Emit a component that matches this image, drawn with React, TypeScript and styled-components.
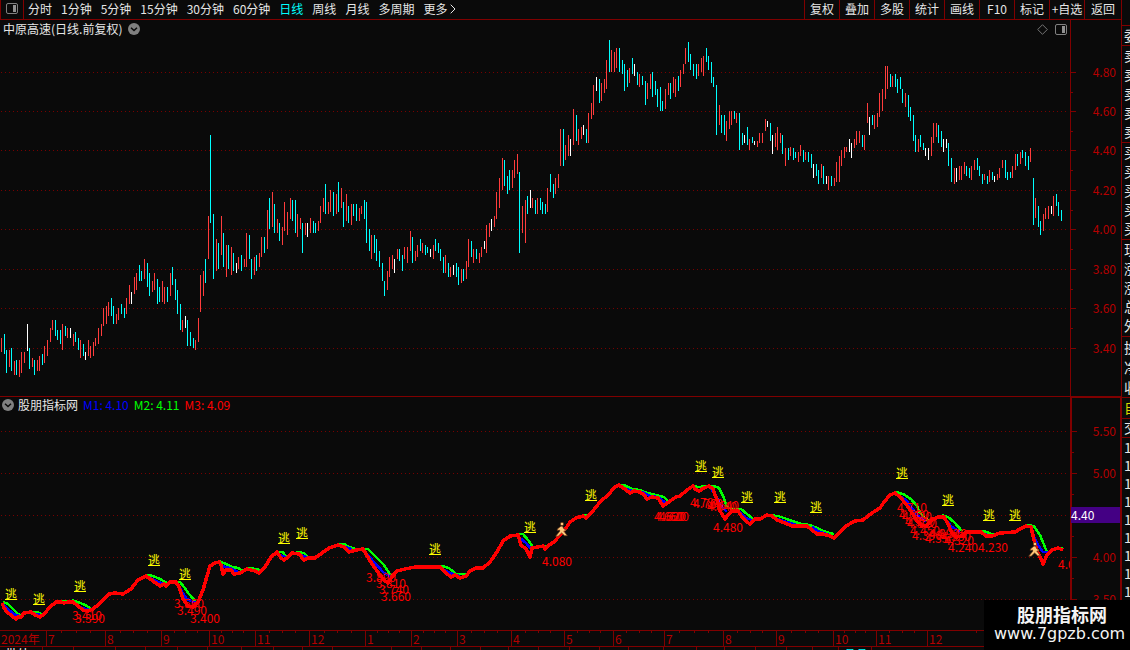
import React from 'react';
import styled, { createGlobalStyle } from 'styled-components';

const GlobalStyle = createGlobalStyle`
  * { box-sizing: border-box; }
  html, body { margin: 0; background: #0a0a0a; }
  body {
    font-family: "Noto Sans CJK SC", "Liberation Sans", sans-serif;
    font-size: 12px;
    line-height: 16px;
    color: #e6e6e6;
  }
  button { font: inherit; color: inherit; background: none; border: 0; padding: 0; cursor: pointer; white-space: nowrap; }
  svg { display: block; }
`;

const RED = '#800000';

/* ---------- chart data ---------- */

/* One session per entry: x, colour (r up, c down, w flat), top-bottom */
const SESSIONS = `
1r338-352 4c334-354 6c350-373 9r350-367 11c348-371 14r361-375 16c360-375 19r360-377 21r352-373 24r352-363
27w324-351 29c348-369 32r358-367 34c360-375 37r360-371 39r356-371 42c354-365 44r346-363 47r340-356 50r328-342
52r320-330 55c320-336 57c330-340 60c330-344 62r324-350 65c326-336 67r328-338 70w328-338 73r334-346 75c332-342
78c338-350 80r340-358 83c344-356 85w352-360 88r340-356 90r346-358 93r342-356 95r338-346 98r328-344 101r324-336
103r308-326 106r306-324 108r302-316 111c298-316 113c306-324 116r314-324 118r308-320 121c304-314 124c308-318
126r298-314 129r285-304 131w292-304 134r277-294 136r273-290 139c265-281 141c271-281 144r259-279 147c263-287
149c273-296 152r281-292 154r273-290 157c279-304 159c287-302 162r281-302 164r287-304 167c287-302 170r273-296
172c267-285 175c279-300 177c290-314 180c304-330 182r320-332 185w316-328 187c320-346 190c332-346 193c338-348
195r340-350 198r318-342 200r275-312 203r271-296 205c259-283 208r216-259 210c135-223 213c214-279 216r239-271
218c243-269 221r216-255 223c233-267 226r245-277 228c245-269 231r247-275 233c253-271 236w263-273 238r257-269
241c255-271 244r259-267 246r233-267 249c235-259 251c259-279 254r257-275 256c255-271 259r253-267 261r237-257
264c237-253 267r210-249 269c198-229 272r192-227 274c204-233 277r219-233 279c223-241 282r227-245 284r202-231
287r212-235 290r198-219 292c200-221 295c200-233 297r214-237 300r218-229 302c223-253 305r223-235 307w223-237
310r218-233 313c221-233 315c223-233 318r221-231 320r206-223 323r198-212 325c184-214 328r202-214 330r190-212
333c192-216 336r194-214 338c182-212 341r188-208 343c202-227 346r194-221 348c206-223 351r204-225 353c204-216
356c204-221 359r208-221 361r206-214 364c200-219 366c202-243 369c229-251 371r235-259 374c235-253 376c239-261
379c251-267 382c263-281 384c281-296 387r271-290 389r257-277 392r255-269 394w259-273 397r249-259 399c249-261
402c255-271 404r247-259 407r247-263 410r231-251 412c237-263 415r251-261 417r245-257 420c239-251 422r243-253
425c245-255 427c247-253 430w249-257 433r245-259 435c239-251 438c243-253 440c249-261 443c257-273 445r255-273
448c263-277 450r267-277 453w265-275 456c263-277 458c267-285 461r269-283 463c269-281 466r261-279 468r239-267
471c241-257 473r249-263 476c249-259 479r253-263 481r247-257 484w241-249 486r225-253 489r223-237 491w219-231
494r216-227 496r192-219 499r178-208 502r158-190 504c160-186 507c176-194 509c170-190 512r170-188 514r160-178
517r154-174 519c172-253 522r206-233 525r200-243 527c196-214 530w190-208 532r198-208 535c200-214 537r198-214
540c198-210 542c202-214 545c204-214 547r188-212 550c174-192 553c184-198 555r178-194 558r174-188 560r129-166
563c129-166 565r145-160 568r135-156 570w139-156 573r109-145 576c115-141 578r129-145 581r127-139 583w125-135
586c129-143 588r113-143 591r103-119 593r85-115 596w77-91 599c79-103 601r83-101 604r79-93 606r60-89 609c40-72
611r50-72 614r52-72 616r48-68 619c48-72 622c60-74 624c64-91 627c70-87 629r68-83 632c58-74 634w64-76 637c72-85
639r74-87 642c76-85 645c81-105 647r83-99 650r74-89 652c72-97 655c81-95 657c89-107 660c87-111 662c101-111
665r89-109 668r83-95 670c83-99 673r77-93 675r79-97 678c76-91 680r70-87 683r64-74 685r48-64 688c42-62 690c54-70
693c64-76 696c64-79 698r64-76 701r58-72 703r56-76 706c48-62 708c56-70 711c62-83 713c77-87 716c85-135
719r105-125 721c115-133 724c115-135 726r121-141 729r111-129 731r111-125 734c111-119 736r113-123 739c113-150
742c133-145 744w135-143 747c127-145 749r139-150 752c137-143 754w141-145 757r141-147 759r133-143 762r133-143
765r119-131 767w121-127 770c123-141 772w135-154 775r133-147 777r127-150 780r133-143 782c135-154 785r148-166
788c148-160 790r147-156 793c148-160 795c152-158 798r152-162 800r145-156 803c150-162 805r152-160 808c152-162
811c154-168 813w164-178 816c164-176 818c170-184 821r164-178 823c166-184 826w176-184 828r176-190 831c176-186
834r178-186 836r162-182 839r156-182 841r150-166 844r147-158 846r147-152 849w139-152 851w143-158 854r139-148
856r131-145 859r131-143 862c135-147 864r135-150 867r103-123 869w117-135 872c115-125 874r115-129 877r113-127
879r93-117 882r89-111 885r66-99 887r66-89 890c74-87 892r76-87 895c74-87 897c79-93 900c77-89 902c89-103
905r93-107 908c95-117 910c107-121 913c115-141 915c135-152 918r139-152 920c135-147 923c143-150 925w148-156
928w148-160 931r137-156 933r123-143 936r123-137 938c125-143 941c131-147 943w139-152 946w139-148 948c143-166
951c158-182 954r168-184 956w168-182 959r166-180 961r166-180 964r162-174 966c166-176 969c168-178 971r166-180
974r160-170 977c158-170 979c166-176 982c174-184 984r174-180 987c176-184 989r170-182 992c172-180 994w176-182
997r174-180 999r168-178 1002r160-168 1005c160-178 1007c172-180 1010c172-178 1012r166-178 1015r154-170
1017c154-166 1020r152-164 1022c150-158 1025c152-166 1028c156-170 1030r148-162 1033c178-225 1035r198-218
1038c206-227 1040c221-235 1043r214-231 1045r208-219 1048r206-219 1051w206-214 1053r196-216 1056c194-206
1058c202-216 1061c210-221`
  .trim()
  .split(/\s+/)
  .map((s) => {
    const m = /^(\d+)([rcw])(\d+)-(\d+)$/.exec(s)!;
    return { x: +m[1], tone: m[2] as 'r' | 'c' | 'w', top: +m[3], bottom: +m[4] };
  });

const TONE = { r: '#ff3c3c', c: '#00ffff', w: '#ffffff' };

const M3 =
  '2,603 4,608 7,612 12,616 16,619 18,617 21,617 24,613 31,612 35,615 40,617 44,614 50,607 56,602 61,602 64,603 68,602 73,602 78,606 83,610 88,611 93,609 99,604 109,594 115,593 123,594 131,589 138,580 146,576 153,581 160,586 164,584 166,586 170,582 176,582 179,587 183,599 188,606 193,607 198,602 203,590 207,576 210,566 215,563 219,562 221,565 223,574 226,570 231,570 234,574 240,573 247,569 255,571 259,573 265,567 271,557 277,552 281,558 284,560 288,557 292,553 299,554 304,560 308,558 315,558 322,553 329,548 338,545 344,547 349,552 356,550 363,549 366,554 372,564 380,575 384,580 388,583 392,577 397,571 405,569 415,567 440,567 446,573 451,577 455,575 460,578 466,576 470,571 476,568 483,568 490,562 497,552 503,541 510,536 518,535 521,545 526,549 530,557 532,548 538,547 543,546 545,549 549,545 554,542 560,535 566,528 570,522 576,518 583,516 586,518 592,512 600,502 608,495 615,487 619,485 626,490 630,493 634,491 640,492 644,495 647,499 652,497 658,498 663,506 670,501 676,497 680,496 687,490 693,486 695,489 699,491 704,488 709,486 713,489 717,500 720,511 725,519 728,515 732,511 738,511 742,517 747,522 750,524 755,519 760,519 767,515 772,516 777,520 785,523 792,526 800,526 807,526 812,530 817,534 823,534 830,536 834,538 838,534 846,526 855,521 863,520 872,513 880,508 884,502 890,495 895,493 900,497 906,504 912,513 917,521 922,526 927,525 932,520 938,517 944,517 948,524 952,533 956,537 962,536 966,532 973,532 981,532 986,536 992,536 1000,533 1015,532 1020,529 1026,526 1031,527 1034,540 1037,551 1041,559 1043,564 1047,555 1052,550 1058,548 1063,550';

const M2 = [
  '3,602 8,604 13,609 18,614 21,616', '32,612 38,612 42,615', '56,601 68,601', '72,600 78,602 85,605 91,609',
  '118,593 124,593', '147,575 153,576 160,579 167,583', '171,582 180,582 184,587 189,594 196,602 200,602',
  '219,561 226,564 232,567 238,568 243,571 250,568 260,570', '277,552 283,552 286,557', '296,552 304,553 308,557',
  '338,544 344,544 349,547 356,549', '361,549 368,549 376,557 384,565 391,576',
  '415,566 442,566 449,568 456,574 466,574', '516,534 523,534 529,541 533,547 546,546', '582,515 587,515',
  '618,485 624,485 632,489 640,490 647,493 656,495 664,497 668,501',
  '692,486 699,487 708,486 714,486 719,488 723,496 727,507 735,510 741,509 747,514 753,519 757,519',
  '767,515 778,516 787,519 795,522 802,524 810,525 817,528 826,532 834,534',
  '896,492 903,494 911,499 917,506 920,513 926,519 930,521', '942,515 948,517 954,522 962,531',
  '978,531 984,531 994,535', '1026,525 1034,526 1040,535 1047,552', '1060,548 1063,548',
];

const M1 = [
  '4,605 9,610 14,614 19,616', '35,614 41,615', '74,603 82,608 90,610', '150,578 158,582 165,584',
  '178,584 182,592 187,599 193,602 198,602', '222,566 230,568 238,572', '280,555 286,557', '300,555 307,557',
  '345,547 352,549', '365,552 374,562 384,573 391,577', '442,569 450,573 460,576', '520,538 526,543 531,549',
  '624,488 632,491 642,492 650,496 658,497 666,503', '711,489 716,496 722,507 727,512', '740,512 746,518 752,520',
  '775,518 787,522 797,525', '812,527 820,532 830,535', '898,495 906,500 912,508 918,516 926,521',
  '945,519 952,527 960,532', '980,533 988,535', '1031,530 1037,543 1043,552 1048,552',
];

/* x, y of the underline */
const EXITS = [
  [6, 599], [34, 604], [75, 591], [149, 565], [180, 579], [279, 543], [297, 538], [430, 554], [525, 532],
  [586, 500], [696, 471], [713, 477], [742, 502], [775, 502], [811, 512], [897, 478], [943, 505], [984, 520],
  [1010, 520],
];

/* x, vertical centre, price */
const STOPS: [number, number, string][] = [
  [73, 616, '3.410'], [76, 619, '3.390'], [175, 604, '3.560'], [178, 611, '3.490'], [191, 619, '3.400'],
  [367, 578, '3.890'], [377, 584, '3.810'], [380, 590, '3.740'], [382, 597, '3.660'], [543, 562, '4.080'],
  [655, 517, '4.660'], [657, 517, '4.620'], [660, 517, '4.600'], [691, 503, '4.780'], [694, 504, '4.760'],
  [708, 507, '4.640'], [710, 506, '4.640'], [714, 528, '4.480'], [898, 508, '4.710'], [900, 515, '4.660'],
  [903, 517, '4.620'], [906, 522, '4.560'], [908, 524, '4.520'], [911, 531, '4.450'], [913, 536, '4.390'],
  [926, 539, '4.350'], [930, 534, '4.390'], [938, 534, '4.340'], [942, 537, '4.330'], [945, 541, '4.320'],
  [949, 548, '4.240'], [979, 548, '4.230'], [1059, 565, '4.050'],
];

const UPPER = { top: 20, height: 376 };
const LOWER = { top: 397, height: 233 };
const LOWER_AXIS = { top: 398, height: 232 };

const PRICE_ROWS: [number, string][] = [
  [72, '4.80'], [111, '4.60'], [150, '4.40'], [190, '4.20'], [229, '4.00'], [269, '3.80'], [308, '3.60'], [348, '3.40'],
];
const LEVEL_ROWS: [number, string][] = [[431, '5.50'], [473, '5.00'], [515, '4.50'], [557, '4.00'], [599, '3.50']];

const MONTHS: [string, number][] = [
  ['7', 59], ['8', 56], ['9', 48], ['10', 46], ['11', 54], ['12', 56], ['1', 46], ['2', 46], ['3', 54], ['4', 53],
  ['5', 49], ['6', 51], ['7', 59], ['8', 53], ['9', 57], ['10', 43], ['11', 51], ['12', 194],
];

const FOOT_TICKS = [42, 73, 115, 145, 177, 207, 241, 273, 302, 332, 391, 421, 450, 480, 508, 538, 569, 599, 628, 663, 696, 724, 755, 786, 812, 838, 871];

/* ---------- layout ---------- */

const Screen = styled.div`
  position: relative;
  display: flex;
  min-height: 100vh;
  overflow: hidden;
  background: #0a0a0a;
`;
const Main = styled.main`
  flex: 1;
  min-width: 0;
  display: flex;
  flex-direction: column;
`;
const Toolbar = styled.header`
  display: flex;
  flex: none;
  height: 20px;
  border-bottom: 1px solid ${RED};
`;
const ToggleButton = styled.button`
  display: flex;
  justify-content: center;
  width: 24px;
  padding-top: 3px;
  border: solid ${RED};
  border-width: 0 1px;
`;
const Periods = styled.nav`
  display: flex;
  gap: 9px;
  height: 18px;
  padding-left: 4px;
`;
const PeriodButton = styled.button<{ $active?: boolean }>`
  display: flex;
  align-items: center;
  gap: 3px;
  line-height: 18px;
  color: ${(p) => (p.$active ? '#00ffff' : '#e6e6e6')};
`;
const Tools = styled.nav`
  display: flex;
  margin-left: auto;
`;
const ToolButton = styled.button`
  width: 35px;
  padding-bottom: 2px;
  line-height: 17px;
  border-left: 1px solid ${RED};
  &:last-child { width: 37px; }
`;
const Panel = styled.section<{ $grow: number; $ruled?: boolean }>`
  display: flex;
  flex: ${(p) => p.$grow} 0 0;
  border-top: ${(p) => (p.$ruled ? `1px solid ${RED}` : '0')};
`;
const Plot = styled.div`
  position: relative;
  flex: 1;
  min-width: 0;
  overflow: hidden;
`;
const Drawing = styled.svg`
  position: absolute;
  inset: 0;
  width: 100%;
  height: 100%;
`;
const Caption = styled.div<{ $indicator?: boolean }>`
  position: relative;
  display: flex;
  align-items: center;
  gap: ${(p) => (p.$indicator ? '4px' : '6px')};
  height: ${(p) => (p.$indicator ? '16px' : '18px')};
  padding: 0 3px 0 ${(p) => (p.$indicator ? '2px' : '3px')};
`;
const PanelTitle = styled.h2`
  margin: 0;
  font-size: 12px;
  font-weight: 400;
`;
const Reading = styled.span<{ $color: string }>`
  margin-left: 1px;
  color: ${(p) => p.$color};
`;
const CaptionTools = styled.div`
  display: flex;
  gap: 7px;
  margin-left: auto;
`;
const Axis = styled.aside<{ $heavy?: boolean }>`
  position: relative;
  flex: none;
  width: 51px;
  border-left: ${(p) => (p.$heavy ? '2px' : '1px')} solid ${RED};
  border-right: ${(p) => (p.$heavy ? '1px' : '0')} solid ${RED};
  border-top: ${(p) => (p.$heavy ? '1px' : '0')} solid ${RED};
`;
const AxisLabel = styled.span<{ $inset: number }>`
  position: absolute;
  right: ${(p) => p.$inset}px;
  margin-top: -8px;
  color: #b40000;
`;
const Tick = styled.i<{ $major?: boolean }>`
  position: absolute;
  left: 0;
  width: ${(p) => (p.$major ? '5px' : '2px')};
  height: 1px;
  background: ${RED};
`;
const LastPrice = styled.span`
  position: absolute;
  left: -1px;
  right: 0;
  height: 16px;
  margin-top: -8px;
  background: #440084;
  color: #ffffff;
`;
const ExitMark = styled.span`
  position: absolute;
  height: 12px;
  margin: -11px 0 0 -1px;
  line-height: 11px;
  border-bottom: 1px solid #ffff00;
  color: #ffff00;
`;
const StopPrice = styled.span`
  position: absolute;
  margin: -9px 0 0 -1px;
  color: #ff0000;
  white-space: nowrap;
`;
const Runner = styled.svg`
  position: absolute;
  margin: -8px 0 0 -6px;
`;
const TimeAxis = styled.div`
  display: grid;
  grid-template-columns: minmax(0, 46fr) ${MONTHS.map(([, span]) => `minmax(0, ${span}fr)`).join(' ')};
  flex: none;
  height: 16px;
  border-top: 1px solid ${RED};
  color: #b40000;
  line-height: 15px;
`;
const Month = styled.span<{ $first?: boolean }>`
  padding-left: 1px;
  white-space: nowrap;
  border-left: ${(p) => (p.$first ? '0' : '1px')} solid ${RED};
  background: ${(p) =>
    p.$first
      ? 'none'
      : `linear-gradient(${RED}, ${RED}) 25% 0 / 1px 2px no-repeat,
         linear-gradient(${RED}, ${RED}) 50% 0 / 1px 2px no-repeat,
         linear-gradient(${RED}, ${RED}) 75% 0 / 1px 2px no-repeat`};
`;
const Foot = styled.footer`
  position: relative;
  flex: none;
  height: 4px;
  overflow: hidden;
  border-top: 1px solid ${RED};
`;
const FootText = styled.span<{ $accent?: boolean }>`
  position: absolute;
  top: 0;
  line-height: 14px;
  color: ${(p) => (p.$accent ? '#00ffff' : '#ffffff')};
`;
const FootTick = styled.i`
  position: absolute;
  top: 0;
  width: 1px;
  height: 4px;
  background: ${RED};
`;
const Quotes = styled.aside`
  flex: none;
  width: 9px;
  padding-top: 25px;
  overflow: hidden;
  border-left: 1px solid ${RED};
  font-size: 14px;
`;
const QuoteGroup = styled.div<{ $row: number; $accent?: boolean; $end?: number }>`
  width: 40px;
  padding: 0 0 ${(p) => p.$end ?? 1}px 2px;
  border-top: 1px solid ${RED};
  line-height: ${(p) => p.$row}px;
  color: ${(p) => (p.$accent ? '#d8d800' : '#e6e6e6')};
`;
const QuoteRow = styled.div`
  white-space: nowrap;
`;
const Watermark = styled.div`
  position: absolute;
  right: 0;
  bottom: 0;
  width: 146px;
  height: 50px;
  padding: 4px 0 0 10px;
  background: #000000;
  color: #f4f4f4;
  text-align: center;
`;
const SiteName = styled.div`
  font-size: 18px;
  font-weight: 700;
  line-height: 21px;
`;
const SiteLink = styled.a`
  display: block;
  padding-right: 8px;
  font-family: "DejaVu Sans", sans-serif;
  font-size: 16px;
  line-height: 18px;
  color: inherit;
  text-decoration: none;
`;

/* ---------- small drawings ---------- */

const PanelIcon = () => (
  <svg width="12" height="11" viewBox="0 0 12 11" aria-hidden="true">
    <rect x="0.5" y="0.5" width="11" height="10" rx="1.5" fill="none" stroke="#808080" />
    <rect x="7" y="2" width="3" height="7" fill="#909090" />
  </svg>
);
const Chevron = () => (
  <svg width="12" height="12" viewBox="0 0 12 12" aria-hidden="true">
    <circle cx="6" cy="6" r="6" fill="#808080" />
    <path d="M3 4.8 6 7.5 9 4.8" fill="none" stroke="#0a0a0a" strokeWidth="1.5" />
  </svg>
);
const Diamond = () => (
  <svg width="11" height="11" viewBox="0 0 11 11" aria-hidden="true">
    <path d="M5.5 .7 10.3 5.5 5.5 10.3 .7 5.5Z" fill="none" stroke="#808080" strokeWidth=".9" />
  </svg>
);

const pctX = (x: number) => `${(x / 1070) * 100}%`;
const pctY = (y: number, p: { top: number; height: number }) => `${((y - p.top) / p.height) * 100}%`;

const Grid = ({ rows }: { rows: [number, string][] }) => (
  <g stroke="#780000" strokeDasharray="1 3" shapeRendering="crispEdges">
    {rows.map(([y]) => (
      <line key={y} x1="1" x2="1066" y1={y + 0.5} y2={y + 0.5} />
    ))}
  </g>
);

const Scale = ({ rows, minor, area, inset }: { rows: [number, string][]; minor: number[]; area: typeof UPPER; inset: number }) => (
  <>
    {rows.map(([y, text]) => (
      <React.Fragment key={y}>
        <Tick $major style={{ top: pctY(y, area) }} />
        {text !== '4.50' && <AxisLabel $inset={inset} style={{ top: pctY(y, area) }}>{text}</AxisLabel>}
      </React.Fragment>
    ))}
    {minor.map((y) => (
      <Tick key={y} style={{ top: pctY(y, area) }} />
    ))}
  </>
);

const PERIODS = ['分时', '1分钟', '5分钟', '15分钟', '30分钟', '60分钟', '日线', '周线', '月线', '多周期'];
const TOOLS = ['复权', '叠加', '多股', '统计', '画线', 'F10', '标记', '+自选', '返回'];

export default function App() {
  return (
    <>
      <GlobalStyle />
      <Screen>
        <Main>
          <Toolbar>
            <ToggleButton aria-label="侧栏"><PanelIcon /></ToggleButton>
            <Periods aria-label="周期">
              {PERIODS.map((p) => (
                <PeriodButton key={p} $active={p === '日线'}>{p}</PeriodButton>
              ))}
              <PeriodButton>
                更多
                <svg width="6" height="10" viewBox="0 0 6 10" aria-hidden="true">
                  <path d="M.7 .7 5 5 .7 9.3" fill="none" stroke="#e6e6e6" />
                </svg>
              </PeriodButton>
            </Periods>
            <Tools aria-label="工具">
              {TOOLS.map((t) => <ToolButton key={t}>{t}</ToolButton>)}
            </Tools>
          </Toolbar>

          <Panel $grow={376}>
            <Plot>
              <Drawing viewBox="0 20 1070 376" preserveAspectRatio="none">
                <Grid rows={PRICE_ROWS} />
                <g shapeRendering="crispEdges">
                  {SESSIONS.map((s) => (
                    <rect key={s.x} x={s.x} y={s.top} width="1" height={s.bottom - s.top} fill={TONE[s.tone]} />
                  ))}
                </g>
              </Drawing>
              <Caption>
                <PanelTitle>中原高速(日线.前复权)</PanelTitle>
                <button aria-label="展开"><Chevron /></button>
                <CaptionTools>
                  <button aria-label="标注"><Diamond /></button>
                  <button aria-label="分栏"><PanelIcon /></button>
                </CaptionTools>
              </Caption>
            </Plot>
            <Axis>
              <Scale rows={PRICE_ROWS} minor={[92, 131, 170, 210, 249, 289, 328]} area={UPPER} inset={5} />
            </Axis>
          </Panel>

          <Panel $grow={233} $ruled>
            <Plot>
              <Drawing viewBox="0 397 1070 233" preserveAspectRatio="none">
                <Grid rows={LEVEL_ROWS} />
                <g fill="none" shapeRendering="crispEdges">
                  {M2.map((p) => <polyline key={p} points={p} stroke="#00ff00" strokeWidth="2.5" />)}
                  {M1.map((p) => <polyline key={p} points={p} stroke="#0000ff" strokeWidth="2.5" />)}
                  <polyline points={M3} stroke="#ff0000" strokeWidth="3.5" strokeLinejoin="round" />
                </g>
              </Drawing>
              {EXITS.map(([x, y]) => (
                <ExitMark key={x} style={{ left: pctX(x), top: pctY(y, LOWER) }}>逃</ExitMark>
              ))}
              {STOPS.map(([x, y, text]) => (
                <StopPrice key={`${x}-${y}`} style={{ left: pctX(x), top: pctY(y, LOWER) }}>{text}</StopPrice>
              ))}
              {[[561, 530], [1034, 550]].map(([x, y]) => (
                <Runner key={x} width="13" height="15" viewBox="0 0 13 15" aria-hidden="true" style={{ left: pctX(x), top: pctY(y, LOWER) }}>
                  <g fill="#ffc878" stroke="#5a2810" strokeWidth=".7">
                    <circle cx="7" cy="2" r="1.7" />
                    <path d="M7.4 4 9 7 11.2 7.6 10.6 9 8.8 9 12.4 13.8 9.6 13.8 6.6 11 3.2 14.2 .6 14.2 4.6 9.4 4.6 8 2.2 8.6 2.4 7 5.8 4.2Z" />
                  </g>
                </Runner>
              ))}
              <Caption $indicator>
                <button aria-label="指标菜单"><Chevron /></button>
                <PanelTitle>股朋指标网</PanelTitle>
                <Reading $color="#0000ff">M1: 4.10</Reading>
                <Reading $color="#00ff00">M2: 4.11</Reading>
                <Reading $color="#ff0000">M3: 4.09</Reading>
              </Caption>
            </Plot>
            <Axis $heavy>
              <Scale rows={LEVEL_ROWS} minor={[452, 494, 536, 578]} area={LOWER_AXIS} inset={4} />
              <LastPrice style={{ top: pctY(515, LOWER_AXIS) }}>4.40</LastPrice>
            </Axis>
          </Panel>

          <TimeAxis>
            <Month $first>2024年</Month>
            {MONTHS.map(([m], i) => <Month key={i}>{m}</Month>)}
          </TimeAxis>
          <Foot aria-hidden="true">
            {FOOT_TICKS.map((x) => <FootTick key={x} style={{ left: `${(x / 1121) * 100}%` }} />)}
            <FootText style={{ left: '0.5%' }}>批处</FootText>
            <FootText $accent style={{ left: '75.3%' }}>品品</FootText>
          </Foot>
        </Main>

        <Quotes aria-label="盘口">
          <QuoteGroup $row={18}>委</QuoteGroup>
          <QuoteGroup $row={19}>
            {[5, 4, 3, 2, 1].map((n) => <QuoteRow key={n}>卖{n}</QuoteRow>)}
          </QuoteGroup>
          <QuoteGroup $row={19}>
            {[1, 2, 3, 4, 5].map((n) => <QuoteRow key={n}>买{n}</QuoteRow>)}
          </QuoteGroup>
          <QuoteGroup $row={19}>
            {['现价', '涨跌', '涨幅', '总量', '外盘'].map((t) => <QuoteRow key={t}>{t}</QuoteRow>)}
          </QuoteGroup>
          <QuoteGroup $row={20} $end={0}>
            {['换手', '净资', '收益'].map((t) => <QuoteRow key={t}>{t}</QuoteRow>)}
          </QuoteGroup>
          <QuoteGroup $row={19} $accent>自选</QuoteGroup>
          <QuoteGroup $row={17}>交易</QuoteGroup>
          <QuoteGroup $row={18}>
            {[0, 1, 2, 3, 4, 5, 6, 7, 8].map((n) => <QuoteRow key={n}>14</QuoteRow>)}
          </QuoteGroup>
        </Quotes>

        <Watermark>
          <SiteName>股朋指标网</SiteName>
          <SiteLink href="#">www.7gpzb.com</SiteLink>
        </Watermark>
      </Screen>
    </>
  );
}
